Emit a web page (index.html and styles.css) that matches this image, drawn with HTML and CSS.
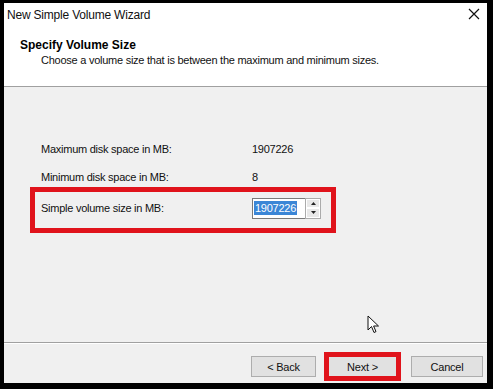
FILE: index.html
```html
<!DOCTYPE html>
<html lang="en">
<head>
    <meta charset="UTF-8">
    <title>New Simple Volume Wizard</title>
    <link rel="stylesheet" href="styles.css">
</head>
<body>
    <div class="window">
        <div class="titlebar">
            <span class="title">New Simple Volume Wizard</span>
            <svg class="close" width="12" height="12" viewBox="0 0 12 12">
                <path d="M1 1 L11 11 M11 1 L1 11" stroke="#111" stroke-width="1.2" fill="none"/>
            </svg>
        </div>

        <div class="header">
            <h1>Specify Volume Size</h1>
            <p>Choose a volume size that is between the maximum and minimum sizes.</p>
        </div>

        <div class="content">
            <div class="row">
                <span class="label">Maximum disk space in MB:</span>
                <span class="value">1907226</span>
            </div>
            <div class="row">
                <span class="label">Minimum disk space in MB:</span>
                <span class="value">8</span>
            </div>
            <div class="row size-row">
                <span class="label">Simple volume size in MB:</span>
                <div class="spin">
                    <div class="spin-input"><span class="selected">1907226</span></div>
                    <div class="spin-buttons">
                        <div class="spin-btn">
                            <svg width="5" height="3" viewBox="0 0 5 3"><path d="M2.5 0 L5 3 L0 3 Z" fill="#222"/></svg>
                        </div>
                        <div class="spin-btn">
                            <svg width="5" height="3" viewBox="0 0 5 3"><path d="M0 0 L5 0 L2.5 3 Z" fill="#222"/></svg>
                        </div>
                    </div>
                </div>
                <div class="highlight size-highlight"></div>
            </div>

            <svg class="cursor" width="14" height="20" viewBox="0 0 14 20">
                <path d="M1 1 L1 15 L4.5 11.5 L7 17.5 L9 16.6 L6.6 11 L11.5 11 Z" fill="#fff" stroke="#111" stroke-width="1" stroke-linejoin="round"/>
            </svg>
        </div>

        <div class="footer">
            <button class="btn">&lt; Back</button>
            <div class="next-wrap">
                <button class="btn">Next &gt;</button>
                <div class="highlight next-highlight"></div>
            </div>
            <button class="btn cancel">Cancel</button>
        </div>
    </div>
</body>
</html>
```

FILE: styles.css
```css
html, body {
    margin: 0;
    padding: 0;
}

body {
    background: #000;
    width: 493px;
    height: 389px;
    overflow: hidden;
    font-family: "Liberation Sans", Arial, sans-serif;
    color: #111;
}

.window {
    margin: 3px 6px 6px 4px;
    height: 380px;
    background: #f0f0f0;
    display: flex;
    flex-direction: column;
}

.titlebar {
    background: #fff;
    height: 24px;
    display: flex;
    align-items: center;
    justify-content: space-between;
    padding: 0 7px 0 3px;
}

.title {
    font-size: 12px;
    letter-spacing: -0.2px;
    color: #111;
    margin-top: -1px;
}

.close {
    margin-top: -2px;
}

.header {
    background: #fff;
    height: 59px;
    border-bottom: 1px solid #a0a0a0;
    padding: 0 0 0 16px;
}

.header h1 {
    margin: 11px 0 0 0;
    font-size: 12px;
    font-weight: bold;
    color: #000;
    line-height: 14px;
}

.header p {
    margin: 1px 0 0 21px;
    font-size: 11px;
    letter-spacing: -0.25px;
    line-height: 14px;
}

.content {
    flex: 1;
    position: relative;
    padding: 55px 0 0 37px;
    font-size: 11px;
    letter-spacing: -0.25px;
    border-bottom: 1px solid #a0a0a0;
    box-shadow: 0 1px 0 #fff;
}

.row {
    display: flex;
    align-items: center;
    height: 14px;
    margin-bottom: 14px;
    position: relative;
}

.label {
    width: 211px;
}

.size-row {
    margin-top: 17px;
}

.spin {
    display: flex;
    height: 21px;
}

.spin-input {
    width: 53px;
    background: #fff;
    border: 1px solid #7a7a7a;
    border-right: none;
    display: flex;
    align-items: center;
    padding-left: 1px;
    box-sizing: border-box;
}

.selected {
    background: #3b86d6;
    color: #fff;
    line-height: 14px;
    padding: 0 1px;
}

.spin-buttons {
    width: 16px;
    display: flex;
    flex-direction: column;
    border: 1px solid #ababab;
    box-sizing: border-box;
    background: #fff;
}

.spin-btn {
    flex: 1;
    display: flex;
    align-items: center;
    justify-content: center;
    background: #e8e8e8;
    border: 1px solid #fff;
}

.highlight {
    position: absolute;
    border: 5px solid #e0131b;
    box-sizing: border-box;
    pointer-events: none;
}

.size-highlight {
    left: -11px;
    top: -14px;
    width: 306px;
    height: 46px;
}

.cursor {
    position: absolute;
    left: 363px;
    top: 228px;
}

.footer {
    height: 40px;
    box-sizing: border-box;
    display: flex;
    align-items: flex-end;
    justify-content: flex-end;
    padding: 0 4px 6px 0;
}

.btn {
    width: 65px;
    height: 21px;
    background: #e1e1e1;
    border: 1px solid #adadad;
    font-family: "Liberation Sans", Arial, sans-serif;
    font-size: 11px;
    letter-spacing: -0.2px;
    color: #111;
    padding: 0;
}

.next-wrap {
    position: relative;
    margin: 0 14px 0 12px;
    display: flex;
}

.next-wrap .btn {
    width: 69px;
}

.next-highlight {
    left: -4px;
    top: -4px;
    width: 77px;
    height: 29px;
}

.cancel {
    width: 72px;
}
```
